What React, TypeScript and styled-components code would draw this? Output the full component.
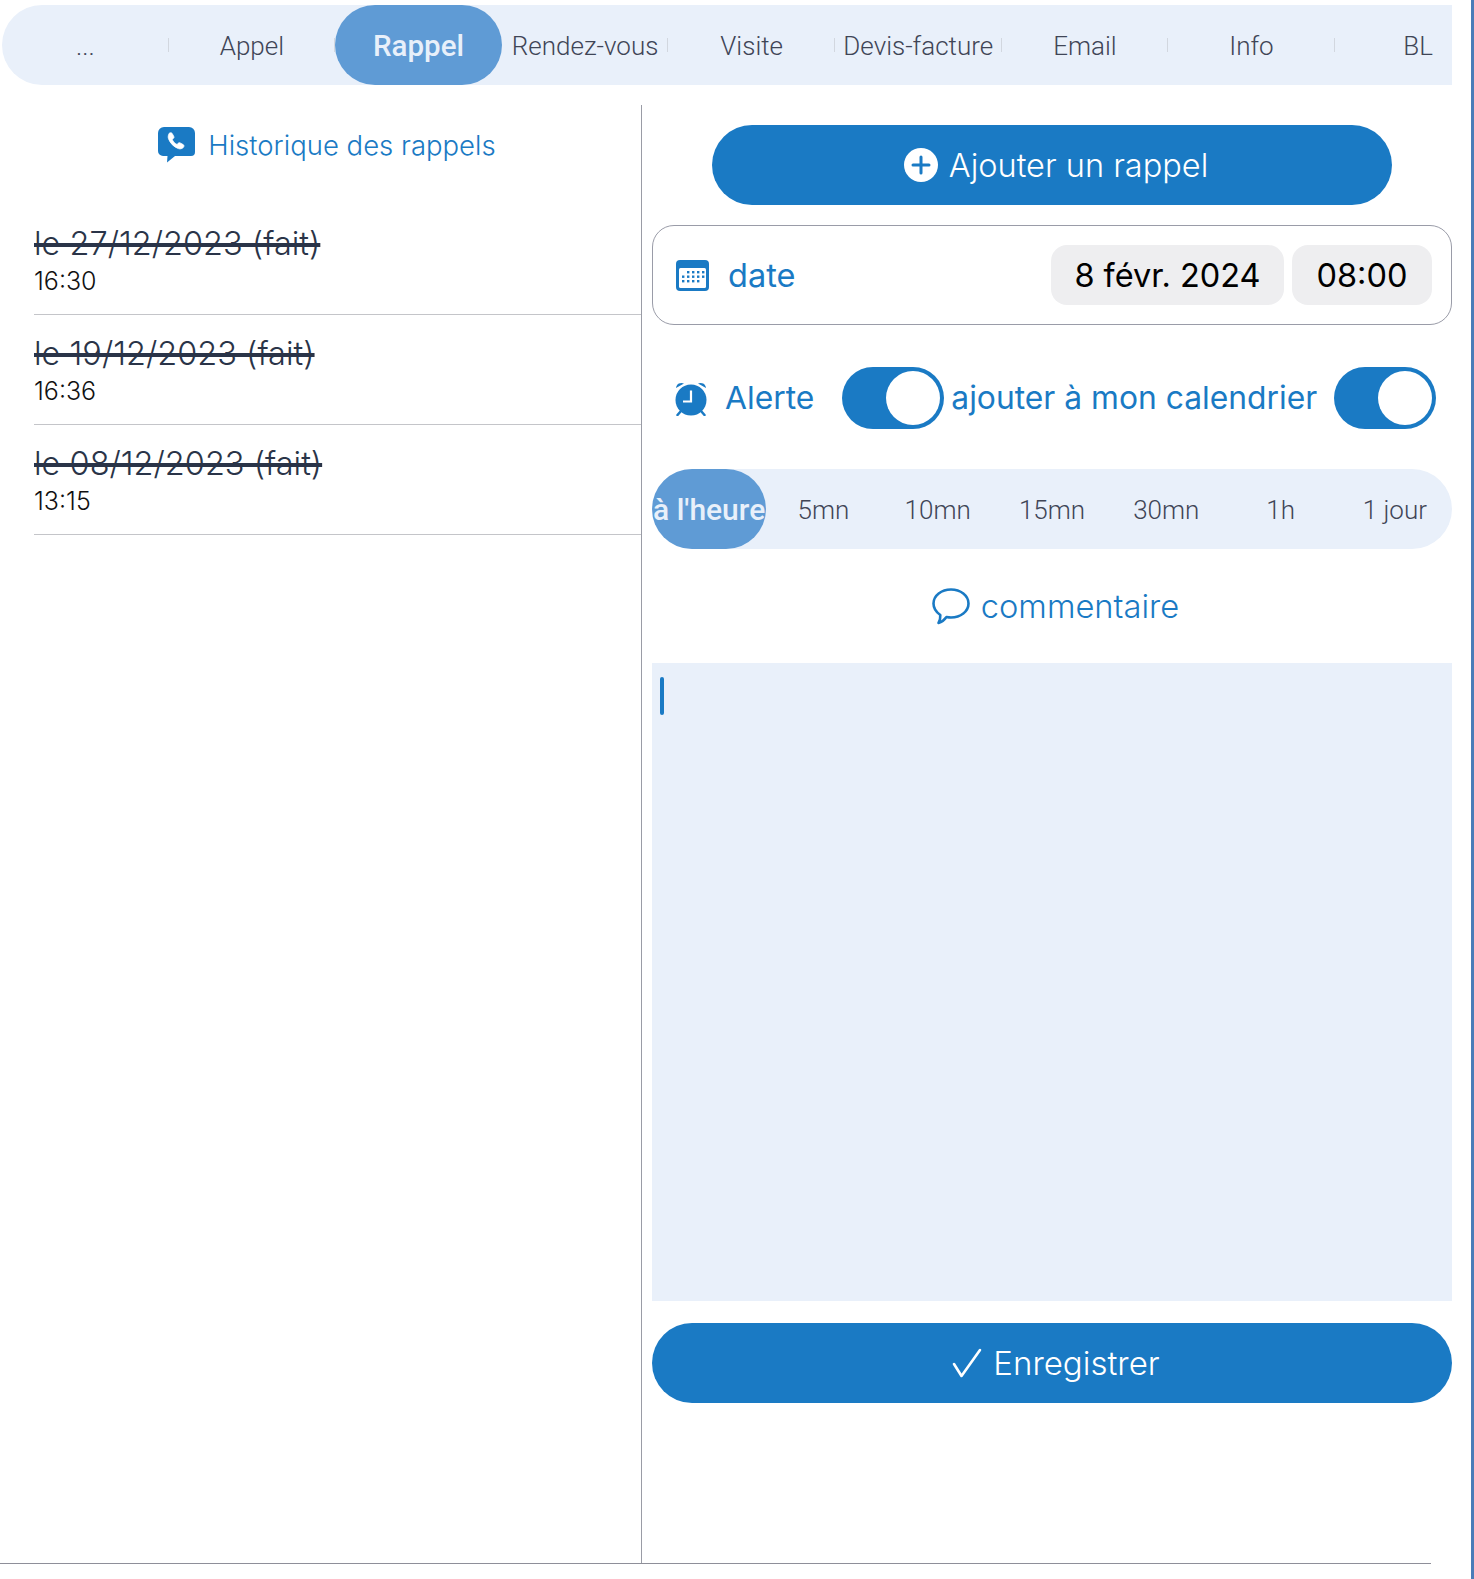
import * as React from 'react'
import styled, { createGlobalStyle } from 'styled-components'

const BLUE = '#1a7ac4'
const PALE = '#e9f0fa'
const SELECTED = '#5f9bd5'
const TAB_TEXT = '#3f4556'

const Global = createGlobalStyle`
  html, body { margin: 0; padding: 0; background: #fff; }
  * { box-sizing: border-box; }
`

const Page = styled.div`
  width: 1474px;
  height: 1579px;
  padding-top: 5px;
  border-right: 3px solid #4a7cb8;
  background: #fff;
  font-family: Inter, "Noto Sans", sans-serif;
  overflow: hidden;
`

const TabBar = styled.div`
  display: flex;
  width: 1450px;
  height: 80px;
  margin-left: 2px;
  background: ${PALE};
  border-radius: 40px 0 0 40px;
  overflow: hidden;
`

const Tab = styled.div<{ $active?: boolean; $last?: boolean }>`
  position: relative;
  flex: 0 0 166.6px;
  display: flex;
  align-items: center;
  justify-content: center;
  padding-top: ${(p) => (p.$active ? '1px' : '2px')};
  border-radius: 40px;
  background: ${(p) => (p.$active ? SELECTED : 'transparent')};
  color: ${(p) => (p.$active ? '#e8f0fa' : TAB_TEXT)};
  font-family: Roboto, "Liberation Sans", sans-serif;
  font-weight: ${(p) => (p.$active ? 500 : 300)};
  font-size: ${(p) => (p.$active ? '29.5px' : '26px')};
  white-space: nowrap;

  &::after {
    content: '';
    display: ${(p) => (p.$active || p.$last ? 'none' : 'block')};
    position: absolute;
    right: 0;
    top: 33px;
    width: 1px;
    height: 14px;
    background: #d2d7df;
  }
`

const Body = styled.div`
  display: flex;
  width: 100%;
  height: 1458px;
  margin-top: 20px;
`

const HistoryPane = styled.section`
  flex: 0 0 642px;
  border-right: 1px solid #9a9ca6;
`

const HistoryTitle = styled.div`
  display: flex;
  align-items: center;
  justify-content: center;
  gap: 13px;
  height: 80px;
  padding-left: 13px;
  color: ${BLUE};
  font-weight: 300;
  font-size: 27.5px;
`

const HistoryList = styled.div`
  margin: 20px 0 0 34px;
`

const HistoryRow = styled.div`
  height: 110px;
  padding-top: 19px;
  border-bottom: 1px solid #c4c5c9;
`

const RowDate = styled.div`
  color: #2a3448;
  font-size: 32.5px;
  font-weight: 300;
  line-height: 40px;
  text-decoration: line-through;
  text-decoration-thickness: 4px;
`

const RowTime = styled.div`
  margin-top: 1px;
  color: #111;
  font-size: 25px;
  font-weight: 300;
  line-height: 32px;
`

const FormPane = styled.section`
  width: 810px;
  padding: 20px 0 0 10px;
  display: flex;
  flex-direction: column;
  flex: none;
`

const PillButton = styled.div<{ $narrow?: boolean }>`
  display: flex;
  align-items: center;
  justify-content: center;
  gap: 11px;
  width: ${(p) => (p.$narrow ? '680px' : '100%')};
  height: 80px;
  margin: ${(p) => (p.$narrow ? '0 auto 0 60px' : '0')};
  padding-left: 8px;
  border-radius: 40px;
  background: ${BLUE};
  color: #fff;
  font-size: ${(p) => (p.$narrow ? '32.5px' : '33px')};
  font-weight: 300;
`

const DateBox = styled.div`
  display: flex;
  align-items: center;
  height: 100px;
  margin-top: 20px;
  padding: 0 19px 0 23px;
  border: 1px solid #9a9ca8;
  border-radius: 22px;
`

const FieldLabel = styled.span`
  color: ${BLUE};
  font-size: 31.8px;
  font-weight: 400;
  line-height: 60px;
  white-space: nowrap;
`

const DateLabel = styled(FieldLabel)`
  margin-left: 19px;
  margin-right: auto;
  padding-top: 1px;
  font-size: 32.5px;
`

const Chip = styled.div<{ $width: number }>`
  display: flex;
  align-items: center;
  justify-content: center;
  width: ${(p) => p.$width}px;
  height: 60px;
  margin-left: 8px;
  border-radius: 16px;
  background: #eeeef0;
  color: #000;
  font-size: 32.5px;
`

const ToggleRow = styled.div`
  display: flex;
  align-items: center;
  height: 62px;
  margin-top: 42px;
  padding-left: 23px;
`

const AlertLabel = styled(FieldLabel)`
  margin-left: 18px;
  margin-right: 28px;
`

const CalendarLabel = styled(FieldLabel)`
  margin-left: 7px;
  margin-right: 17px;
`

const Toggle = styled.div`
  display: flex;
  justify-content: flex-end;
  align-items: center;
  flex: none;
  width: 102px;
  height: 62px;
  padding-right: 4px;
  border-radius: 31px;
  background: ${BLUE};
`

const Knob = styled.div`
  width: 54px;
  height: 54px;
  border-radius: 50%;
  background: #fff;
`

const DelayBar = styled.div`
  display: grid;
  grid-template-columns: repeat(7, 1fr);
  height: 80px;
  margin-top: 40px;
  border-radius: 40px;
  background: ${PALE};
`

const DelayItem = styled.div<{ $active?: boolean }>`
  display: flex;
  align-items: center;
  justify-content: center;
  padding-top: ${(p) => (p.$active ? '0' : '2px')};
  border-radius: 40px;
  background: ${(p) => (p.$active ? SELECTED : 'transparent')};
  color: ${(p) => (p.$active ? '#e8f0fa' : TAB_TEXT)};
  font-family: Roboto, "Liberation Sans", sans-serif;
  font-weight: ${(p) => (p.$active ? 500 : 300)};
  font-size: ${(p) => (p.$active ? '30px' : '26px')};
  white-space: nowrap;
`

const CommentTitle = styled.div`
  display: flex;
  align-items: center;
  justify-content: center;
  gap: 11px;
  height: 40px;
  margin-top: 37px;
  padding-left: 7px;
  color: ${BLUE};
  font-size: 32.7px;
  font-weight: 300;
`

const CommentArea = styled.div`
  height: 638px;
  margin-top: 37px;
  padding: 14px 0 0 8px;
  background: ${PALE};
`

const Caret = styled.div`
  width: 4px;
  height: 38px;
  border-radius: 2px;
  background: ${BLUE};
`

const SaveWrap = styled.div`
  margin-top: 22px;
`

const BottomRule = styled.div`
  width: 1431px;
  height: 1px;
  background: #8e8f99;
`

const IconSlot = styled.svg`
  flex: none;
`

const PhoneBubble = () => (
  <IconSlot width="37" height="36" viewBox="0 0 37 36">
    <path
      d="M6 0h25a6 6 0 0 1 6 6v19a4 4 0 0 1-4 4H17l-8 6.500.5-6.500H5a5 5 0 0 1-5-5V6a6 6 0 0 1 6-6z"
      fill={BLUE}
    />
    <path
      d="M11 6.500c1-1 2.600-1 3.200 0l1.600 3c.4.800.1 1.500-.6 2.100l-1 .9c.9 2.100 2.600 4 4.800 5l1.100-1.200c.6-.6 1.300-.8 2-.4l3.100 1.700c1 .6 1 2.200-.1 3.100-1.300 1.100-3 1.500-4.700.9-4.700-1.700-8.400-5.500-10-10.200-.5-1.700 0-3.400.6-4.900z"
      fill="#fff"
      stroke="#fff"
      strokeWidth="0.8"
    />
  </IconSlot>
)

const PlusCircle = () => (
  <IconSlot width="34" height="34" viewBox="0 0 34 34">
    <circle cx="17" cy="17" r="17" fill="#fff" />
    <path d="M17 9v16M9 17h16" stroke={BLUE} strokeWidth="3" strokeLinecap="round" />
  </IconSlot>
)

const CalendarIcon = () => (
  <IconSlot width="33" height="31" viewBox="0 0 33 31">
    <rect width="33" height="31" rx="4" fill={BLUE} />
    <rect x="3" y="8" width="27" height="20" rx="1.500" fill="#fff" />
    {[
      [12, 11], [17, 11], [22, 11], [27, 11],
      [7, 15.5], [12, 15.5], [17, 15.5], [22, 15.5], [27, 15.5],
      [7, 20], [12, 20], [17, 20], [22, 20],
    ].map(([x, y]) => (
      <rect key={`${x}-${y}`} x={x - 1} y={y} width="2.400" height="2.400" fill={BLUE} />
    ))}
  </IconSlot>
)

const AlarmIcon = () => (
  <IconSlot width="32" height="35" viewBox="0 0 32 35">
    <circle cx="16" cy="19" r="15.500" fill={BLUE} />
    <path d="M1 7a5.500 5.500 0 0 1 8-4.500zM31 7a5.500 5.500 0 0 0-8-4.500z" fill={BLUE} />
    <path d="M6 30l-3.500 4M26 30l3.500 4" stroke={BLUE} strokeWidth="2.500" strokeLinecap="round" />
    <path d="M16 9.500V20.500H8" stroke="#fff" strokeWidth="2.200" fill="none" />
  </IconSlot>
)

const CommentIcon = () => (
  <IconSlot width="38" height="37" viewBox="0 0 38 37">
    <path
      d="M19 1.500c9.500 0 17.500 6 17.500 14s-8 14-17.500 14c-1.500 0-3-.2-4.500-.5-1.800 2.500-4.500 5-8 6 1.300-2 2-4.500 1.800-8C4 24 1.500 20 1.500 15.500c0-8 8-14 17.500-14z"
      fill="none"
      stroke={BLUE}
      strokeWidth="2.600"
      strokeLinejoin="round"
    />
  </IconSlot>
)

const CheckIcon = () => (
  <IconSlot width="30" height="30" viewBox="0 0 30 30">
    <path d="M2 16l7.500 12L28 2" fill="none" stroke="#fff" strokeWidth="2.600" strokeLinecap="round" strokeLinejoin="round" />
  </IconSlot>
)

const tabs = ['...', 'Appel', 'Rappel', 'Rendez-vous', 'Visite', 'Devis-facture', 'Email', 'Info', 'BL']
const delays = ["à l'heure", '5mn', '10mn', '15mn', '30mn', '1h', '1 jour']
const history = [
  { date: 'le 27/12/2023 (fait)', time: '16:30' },
  { date: 'le 19/12/2023 (fait)', time: '16:36' },
  { date: 'le 08/12/2023 (fait)', time: '13:15' },
]

const App = () => {
  return (
    <Page>
      <Global />
      <TabBar>
        {tabs.map((t, i) => (
          <Tab key={t} $active={t === 'Rappel'} $last={i === tabs.length - 1}>{t}</Tab>
        ))}
      </TabBar>
      <Body>
        <HistoryPane>
          <HistoryTitle>
            <PhoneBubble />
            Historique des rappels
          </HistoryTitle>
          <HistoryList>
            {history.map((h) => (
              <HistoryRow key={h.date}>
                <RowDate>{h.date}</RowDate>
                <RowTime>{h.time}</RowTime>
              </HistoryRow>
            ))}
          </HistoryList>
        </HistoryPane>
        <FormPane>
          <PillButton $narrow>
            <PlusCircle />
            Ajouter un rappel
          </PillButton>
          <DateBox>
            <CalendarIcon />
            <DateLabel>date</DateLabel>
            <Chip $width={233}>8 févr. 2024</Chip>
            <Chip $width={140}>08:00</Chip>
          </DateBox>
          <ToggleRow>
            <AlarmIcon />
            <AlertLabel>Alerte</AlertLabel>
            <Toggle><Knob /></Toggle>
            <CalendarLabel>ajouter à mon calendrier</CalendarLabel>
            <Toggle><Knob /></Toggle>
          </ToggleRow>
          <DelayBar>
            {delays.map((d, i) => (
              <DelayItem key={d} $active={i === 0}>{d}</DelayItem>
            ))}
          </DelayBar>
          <CommentTitle>
            <CommentIcon />
            commentaire
          </CommentTitle>
          <CommentArea>
            <Caret />
          </CommentArea>
          <SaveWrap>
            <PillButton>
              <CheckIcon />
              Enregistrer
            </PillButton>
          </SaveWrap>
        </FormPane>
      </Body>
      <BottomRule />
    </Page>
  )
}

export default App
